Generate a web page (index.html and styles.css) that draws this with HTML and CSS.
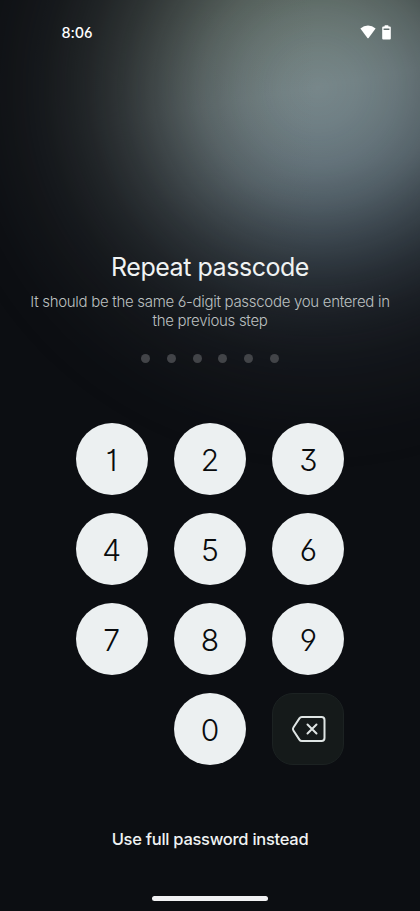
FILE: index.html
```
<!DOCTYPE html>
<html lang="en">
<head>
<meta charset="utf-8">
<meta name="viewport" content="width=device-width, initial-scale=1">
<title>Repeat passcode</title>
<link rel="stylesheet" href="styles.css">
</head>
<body>
<main class="screen">
  <div class="glow"></div>
  <header class="status">
    <span class="time">8:06</span>
    <span class="status-icons">
      <svg width="16" height="14" viewBox="0 0 16 14" fill="#fff"><path d="M.4 3.500Q3.800.4 8 .4T15.600 3.500L8.600 12.900Q8 13.600 7.400 12.900Z"/></svg>
      <svg width="9" height="15" viewBox="0 0 9 15" fill="#fff"><path fill-rule="evenodd" d="M2.500 1.500V.9Q2.500.3 3.100.3H5.900Q6.500.3 6.500.9V1.500H7.800Q8.800 1.500 8.800 2.500V13.500Q8.800 14.500 7.800 14.500H1.200Q.2 14.500.2 13.500V2.500Q.2 1.500 1.200 1.500ZM1.600 3.400V5H7.400V3.400Z"/></svg>
    </span>
  </header>
  <section class="intro">
    <h1 class="title">Repeat passcode</h1>
    <p class="hint"><span class="hint-line">It should be the same 6-digit passcode you entered in</span> <span class="hint-line">the previous step</span></p>
    <div class="dots"><i></i><i></i><i></i><i></i><i></i><i></i></div>
  </section>
  <section class="keypad">
    <button class="key">1</button><button class="key">2</button><button class="key">3</button>
    <button class="key">4</button><button class="key">5</button><button class="key">6</button>
    <button class="key">7</button><button class="key">8</button><button class="key">9</button>
    <button class="key key-zero">0</button>
    <button class="key key-delete" aria-label="Delete">
      <svg width="36" height="28" viewBox="0 0 36 28" fill="none" stroke="#dfe5e4" stroke-width="2" stroke-linecap="round" stroke-linejoin="round"><path d="M10.900 2H30.500Q33.500 2 33.500 5V23Q33.500 26 30.500 26H10.900Q9.300 26 8.400 24.600L2.400 15.500Q1.400 14 2.400 12.500L8.400 3.400Q9.300 2 10.900 2Z"/><path d="M16.500 9.500L25.500 18.500M25.500 9.500L16.500 18.500"/></svg>
    </button>
  </section>
  <a class="alternate">Use full password instead</a>
  <div class="home-bar"></div>
</main>
</body>
</html>
```

FILE: styles.css
```
* { box-sizing: border-box; }
body { margin: 0; background: #0c0e12; }
.screen {
  position: relative;
  height: 911px;
  width: 420px;
  overflow: hidden;
  display: flex;
  flex-direction: column;
  align-items: center;
  background: #0c0e12;
  color: #f0f3f3;
  font-family: Inter, "Liberation Sans", sans-serif;
  font-feature-settings: "cv01", "cv03", "cv04", "cv09";
}
.glow {
  position: absolute;
  inset: 0 0 auto;
  height: 520px;
  background:
    linear-gradient(90deg, rgba(105,112,106,.7), rgba(110,124,116,0) 75%),
    linear-gradient(170deg, #6f7e77 8%, #77878a 24%, #6f8088 38%, #5b6c78 54%, #4e5966 66%);
  -webkit-mask-image: radial-gradient(390px 385px at 318px 88px, #000, rgba(0,0,0,.965) 10%, rgba(0,0,0,.88) 20%, rgba(0,0,0,.74) 30%, rgba(0,0,0,.545) 40%, rgba(0,0,0,.355) 50%, rgba(0,0,0,.21) 60%, rgba(0,0,0,.115) 70%, rgba(0,0,0,.055) 80%, rgba(0,0,0,.016) 90%, transparent);
  mask-image: radial-gradient(390px 385px at 318px 88px, #000, rgba(0,0,0,.965) 10%, rgba(0,0,0,.88) 20%, rgba(0,0,0,.74) 30%, rgba(0,0,0,.545) 40%, rgba(0,0,0,.355) 50%, rgba(0,0,0,.21) 60%, rgba(0,0,0,.115) 70%, rgba(0,0,0,.055) 80%, rgba(0,0,0,.016) 90%, transparent);
}
.status, .intro, .keypad, .alternate, .home-bar { z-index: 1; }
.status {
  width: 100%;
  height: 64px;
  padding: 0 29.500px 0 61.500px;
  display: flex;
  align-items: center;
  justify-content: space-between;
}
.time { color: #fff; font-size: 14.500px; font-weight: 550; letter-spacing: -.1px; }
.status-icons { display: flex; align-items: center; gap: 6px; }
.status-icons svg { display: block; }
.intro {
  width: 100%;
  padding-top: 187px;
  display: flex;
  flex-direction: column;
  align-items: center;
}
.title { margin: 0; font-size: 25px; line-height: 32px; font-weight: 400; letter-spacing: -.46px; white-space: nowrap; }
.hint { margin: 9px 0 0; color: #bcc0c0; font-size: 15px; line-height: 19px; font-weight: 330; text-align: center; }
.hint-line { display: block; white-space: nowrap; letter-spacing: -.3px; }
.dots { display: flex; gap: 16.700px; margin-top: 24px; }
.dots i { width: 9px; height: 9px; border-radius: 50%; background: #424448; }
.keypad {
  margin-top: 60px;
  display: grid;
  grid-template-columns: repeat(3, 72px);
  grid-auto-rows: 72px;
  gap: 18px 26.400px;
}
.key {
  display: flex;
  align-items: center;
  justify-content: center;
  border: 0;
  padding: 2px 0 0;
  border-radius: 50%;
  background: #ecf0f1;
  color: #090b0d;
  font: inherit;
  font-feature-settings: inherit;
  font-size: 30px;
  font-weight: 360;
}
.key-zero { grid-column: 2; }
.key-delete {
  padding: 0 0 0 2px;
  border: 1px solid #1c2222;
  border-radius: 21px;
  background: #151a1a;
}
.alternate { margin-top: 62px; font-size: 16.500px; line-height: 24px; font-weight: 480; letter-spacing: -.27px; white-space: nowrap; }
.home-bar { margin-top: 45px; width: 116px; height: 5px; border-radius: 3px; background: #f1f1f3; }
```
